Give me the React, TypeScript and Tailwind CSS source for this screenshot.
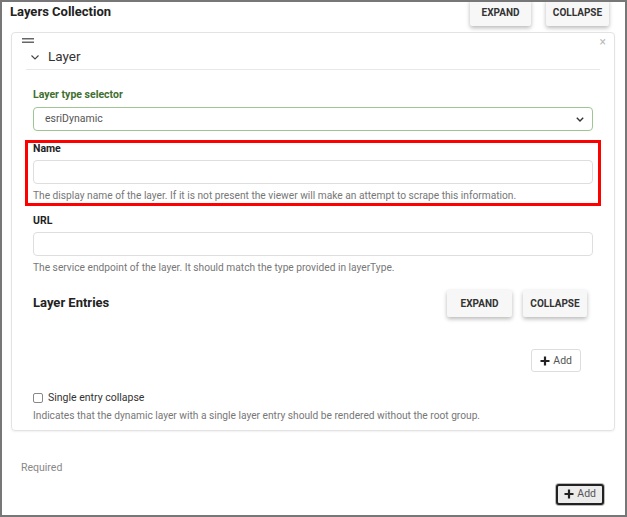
import React from "react"

const font = { fontFamily: "Roboto, 'Liberation Sans', sans-serif" }

function RaisedButton({ label, width }: { label: string; width: string }) {
    return (
        <button className={`${width} h-[27px] bg-[#f7f7f7] rounded-[2px] shadow-[0_2px_4px_rgba(0,0,0,0.28)] text-[10px] font-bold text-[#333]`}>
            {label}
        </button>
    )
}

function AddButton({ focused = false }: { focused?: boolean }) {
    return (
        <button
            className={`flex items-center gap-[3px] rounded-[3px] text-[10.5px] text-[#555] ${
                focused
                    ? "h-[21px] px-[6px] border-2 border-[#222] bg-[#ececec] shadow-[0_0_0_1px_#bbb]"
                    : "h-[23px] px-[8px] border border-[#ddd] bg-white"
            }`}
        >
            <svg width="10" height="10" viewBox="0 0 10 10">
                <path d="M5 0.5v9M0.5 5h9" stroke="#222" strokeWidth="2.2" />
            </svg>
            Add
        </button>
    )
}

function Field({ label, help }: { label: string; help: string }) {
    return (
        <div className="flex flex-col">
            <label className="text-[10.5px] font-bold text-[#222] leading-[12px]">{label}</label>
            <div className="mt-[5px] h-[24px] border border-[#dedede] rounded-[4px] bg-white" />
            <p className="mt-[6px] text-[10.2px] text-[#777] leading-[12px]">{help}</p>
        </div>
    )
}

export default function App() {
    return (
        <div style={font} className="w-[627px] h-[517px] bg-white border-2 border-[#777] overflow-hidden flex flex-col">
            <div className="shrink-0 flex items-start justify-between pl-[8px] pr-[16px] h-[30px]">
                <h1 className="mt-[1px] text-[13px] font-bold text-[#222] leading-[18px]">Layers Collection</h1>
                <div className="flex gap-[15px] -mt-[3px]">
                    <RaisedButton label="EXPAND" width="w-[61px]" />
                    <RaisedButton label="COLLAPSE" width="w-[63px]" />
                </div>
            </div>

            <div className="shrink-0 ml-[9px] mr-[10px] border border-[#e3e3e3] rounded-[4px] shadow-[0_1px_2px_rgba(0,0,0,0.06)] relative">
                <div className="px-[10px] pt-[5px]">
                    <svg width="12" height="5" viewBox="0 0 12 5">
                        <path d="M0 0.75h12M0 4.25h12" stroke="#666" strokeWidth="1.3" />
                    </svg>
                </div>
                <span className="absolute top-0 right-[8px] text-[12px] text-[#bbb]">×</span>

                <div className="mx-[14px] flex items-center gap-[9px] h-[24px] pl-[5px] border-b border-[#e8e8e8] mt-[3px] pb-[2px]">
                    <svg width="8" height="6" viewBox="0 0 8 6">
                        <path d="M0.5 1.5l3.5 3.5 3.5-3.5" stroke="#444" strokeWidth="1.1" fill="none" />
                    </svg>
                    <span className="text-[13.5px] text-[#333]">Layer</span>
                </div>

                <div className="px-[21px] pt-[18px] pb-[8px] flex flex-col">
                    <label className="text-[10.5px] font-bold text-[#3f6f30] leading-[14px]">Layer type selector</label>
                    <div className="mt-[5px] h-[24px] border border-[#9fc594] rounded-[4px] flex items-center justify-between pl-[11px] pr-[8px]">
                        <span className="text-[10.5px] text-[#555]">esriDynamic</span>
                        <svg width="8" height="5" viewBox="0 0 8 5">
                            <path d="M0.8 0.8l3.2 3.2 3.2-3.2" stroke="#333" strokeWidth="1.4" fill="none" />
                        </svg>
                    </div>

                    <div className="mt-[9px] -mx-[8px] px-[5px] pt-0 pb-[1px] border-[3px] border-[#ff0000]">
                        <Field
                            label="Name"
                            help="The display name of the layer. If it is not present the viewer will make an attempt to scrape this information."
                        />
                    </div>

                    <div className="mt-[9px]">
                        <Field
                            label="URL"
                            help="The service endpoint of the layer. It should match the type provided in layerType."
                        />
                    </div>

                    <div className="mt-[16px] flex items-start justify-between pr-[6px]">
                        <h2 className="mt-[3px] text-[13px] font-bold text-[#222]">Layer Entries</h2>
                        <div className="flex gap-[11px]">
                            <RaisedButton label="EXPAND" width="w-[65px]" />
                            <RaisedButton label="COLLAPSE" width="w-[64px]" />
                        </div>
                    </div>

                    <div className="mt-[32px] flex justify-end pr-[12px]">
                        <AddButton />
                    </div>

                    <label className="mt-[18px] flex items-center gap-[5px] text-[10.5px] text-[#333]">
                        <span className="w-[10px] h-[10px] border border-[#888] rounded-[2px] bg-white" />
                        Single entry collapse
                    </label>
                    <p className="mt-[4px] text-[10.2px] text-[#777] leading-[12px]">
                        Indicates that the dynamic layer with a single layer entry should be rendered without the root group.
                    </p>
                </div>
            </div>

            <div className="shrink-0 pl-[19px] mt-[29px] text-[10.5px] text-[#888]">Required</div>
            <div className="shrink-0 flex justify-end pr-[21px] mt-[8px]">
                <AddButton focused />
            </div>
        </div>
    )
}
